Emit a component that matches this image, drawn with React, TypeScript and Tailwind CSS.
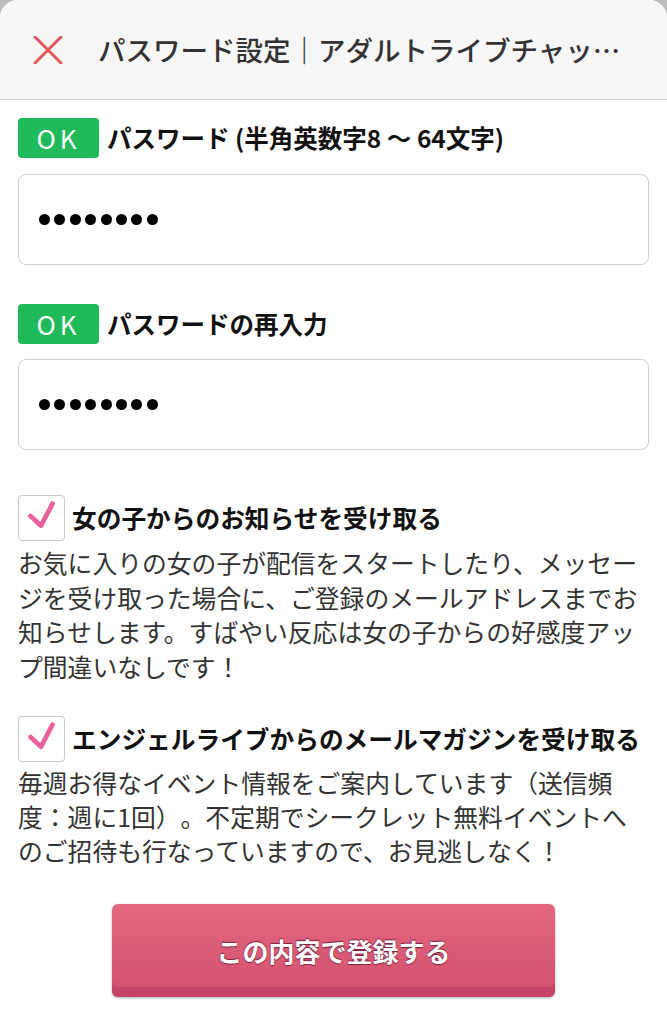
const font = { fontFamily: '"Noto Sans CJK JP", "Noto Sans", sans-serif' };

function OkBadge() {
  return (
    <span className="flex h-[40px] w-[81px] shrink-0 items-center justify-center rounded-[4px] bg-[#1fba5a] text-[26px] leading-none tracking-[4px] text-white">
      OK
    </span>
  );
}

function PasswordField() {
  return (
    <div className="flex h-[91px] items-center rounded-[8px] border border-[#cfcfcf] bg-white pl-[20px]">
      <div className="flex gap-[4.4px]">
        {Array.from({ length: 8 }).map((_, i) => (
          <span key={i} className="h-[11px] w-[11px] rounded-full bg-black" />
        ))}
      </div>
    </div>
  );
}

function CheckBox() {
  return (
    <span className="flex h-[46px] w-[47px] shrink-0 items-center justify-center rounded-[4px] border border-[#c9c9c9] bg-white">
      <svg width="47" height="46" viewBox="0 0 47 46">
        <path
          d="M12 21 L23 31 L35 8"
          fill="none"
          stroke="#e9629b"
          strokeWidth="5"
          strokeLinecap="round"
          strokeLinejoin="round"
        />
      </svg>
    </span>
  );
}

export default function App() {
  return (
    <div className="w-full bg-[#bdbdbd] [text-spacing-trim:space-all]" style={font}>
      <div className="min-h-[1024px] overflow-hidden rounded-t-[18px] bg-white">
        <header className="flex h-[100px] items-center border-b border-[#d0d0d0] bg-[#f7f7f7]">
          <svg className="ml-[33px] shrink-0" width="30" height="28" viewBox="0 0 30 28">
            <path d="M2 1 L28 27 M28 1 L2 27" stroke="#e05a5a" strokeWidth="3" strokeLinecap="round" />
          </svg>
          <h1 className="ml-[35px] whitespace-nowrap text-[27.5px] font-medium text-[#333]">
            パスワード設定｜アダルトライブチャッ…
          </h1>
        </header>

        <main className="px-[18px] pb-[26px]">
          <div className="mt-[18px] flex items-center gap-[8px]">
            <OkBadge />
            <span className="text-[24.5px] font-bold text-[#111]">パスワード (半角英数字8 〜 64文字)</span>
          </div>
          <div className="mt-[16px]">
            <PasswordField />
          </div>

          <div className="mt-[39px] flex items-center gap-[8px]">
            <OkBadge />
            <span className="text-[24.5px] font-bold text-[#111]">パスワードの再入力</span>
          </div>
          <div className="mt-[15px]">
            <PasswordField />
          </div>

          <div className="mt-[45px] flex items-center gap-[7px]">
            <CheckBox />
            <span className="text-[24.7px] font-bold text-[#111]">女の子からのお知らせを受け取る</span>
          </div>
          <p className="mt-[4px] text-[24.8px] leading-[34.5px] text-[#333]">
            お気に入りの女の子が配信をスタートしたり、メッセー
            <br />
            ジを受け取った場合に、ご登録のメールアドレスまでお
            <br />
            知らせします。すばやい反応は女の子からの好感度アッ
            <br />
            プ間違いなしです！
          </p>

          <div className="mt-[33px] flex items-center gap-[7px]">
            <CheckBox />
            <span className="whitespace-nowrap text-[24.7px] font-bold text-[#111]">
              エンジェルライブからのメールマガジンを受け取る
            </span>
          </div>
          <p className="mt-[3px] text-[24.8px] leading-[34px] text-[#333]">
            毎週お得なイベント情報をご案内しています（送信頻
            <br />
            度：週に1回）。不定期でシークレット無料イベントへ
            <br />
            のご招待も行なっていますので、お見逃しなく！
          </p>

          <div className="mt-[37px] flex justify-center">
            <button className="flex h-[93px] w-[443px] items-center justify-center rounded-[6px] bg-gradient-to-b from-[#e3677f] to-[#d2506f] text-[26px] font-bold text-white shadow-[inset_0_-10px_0_#c4446a,0_1px_3px_rgba(0,0,0,0.3)] [text-shadow:0_-1px_1px_#7a2040,0_1px_1px_#7a2040]">
              この内容で登録する
            </button>
          </div>
        </main>
      </div>
    </div>
  );
}
